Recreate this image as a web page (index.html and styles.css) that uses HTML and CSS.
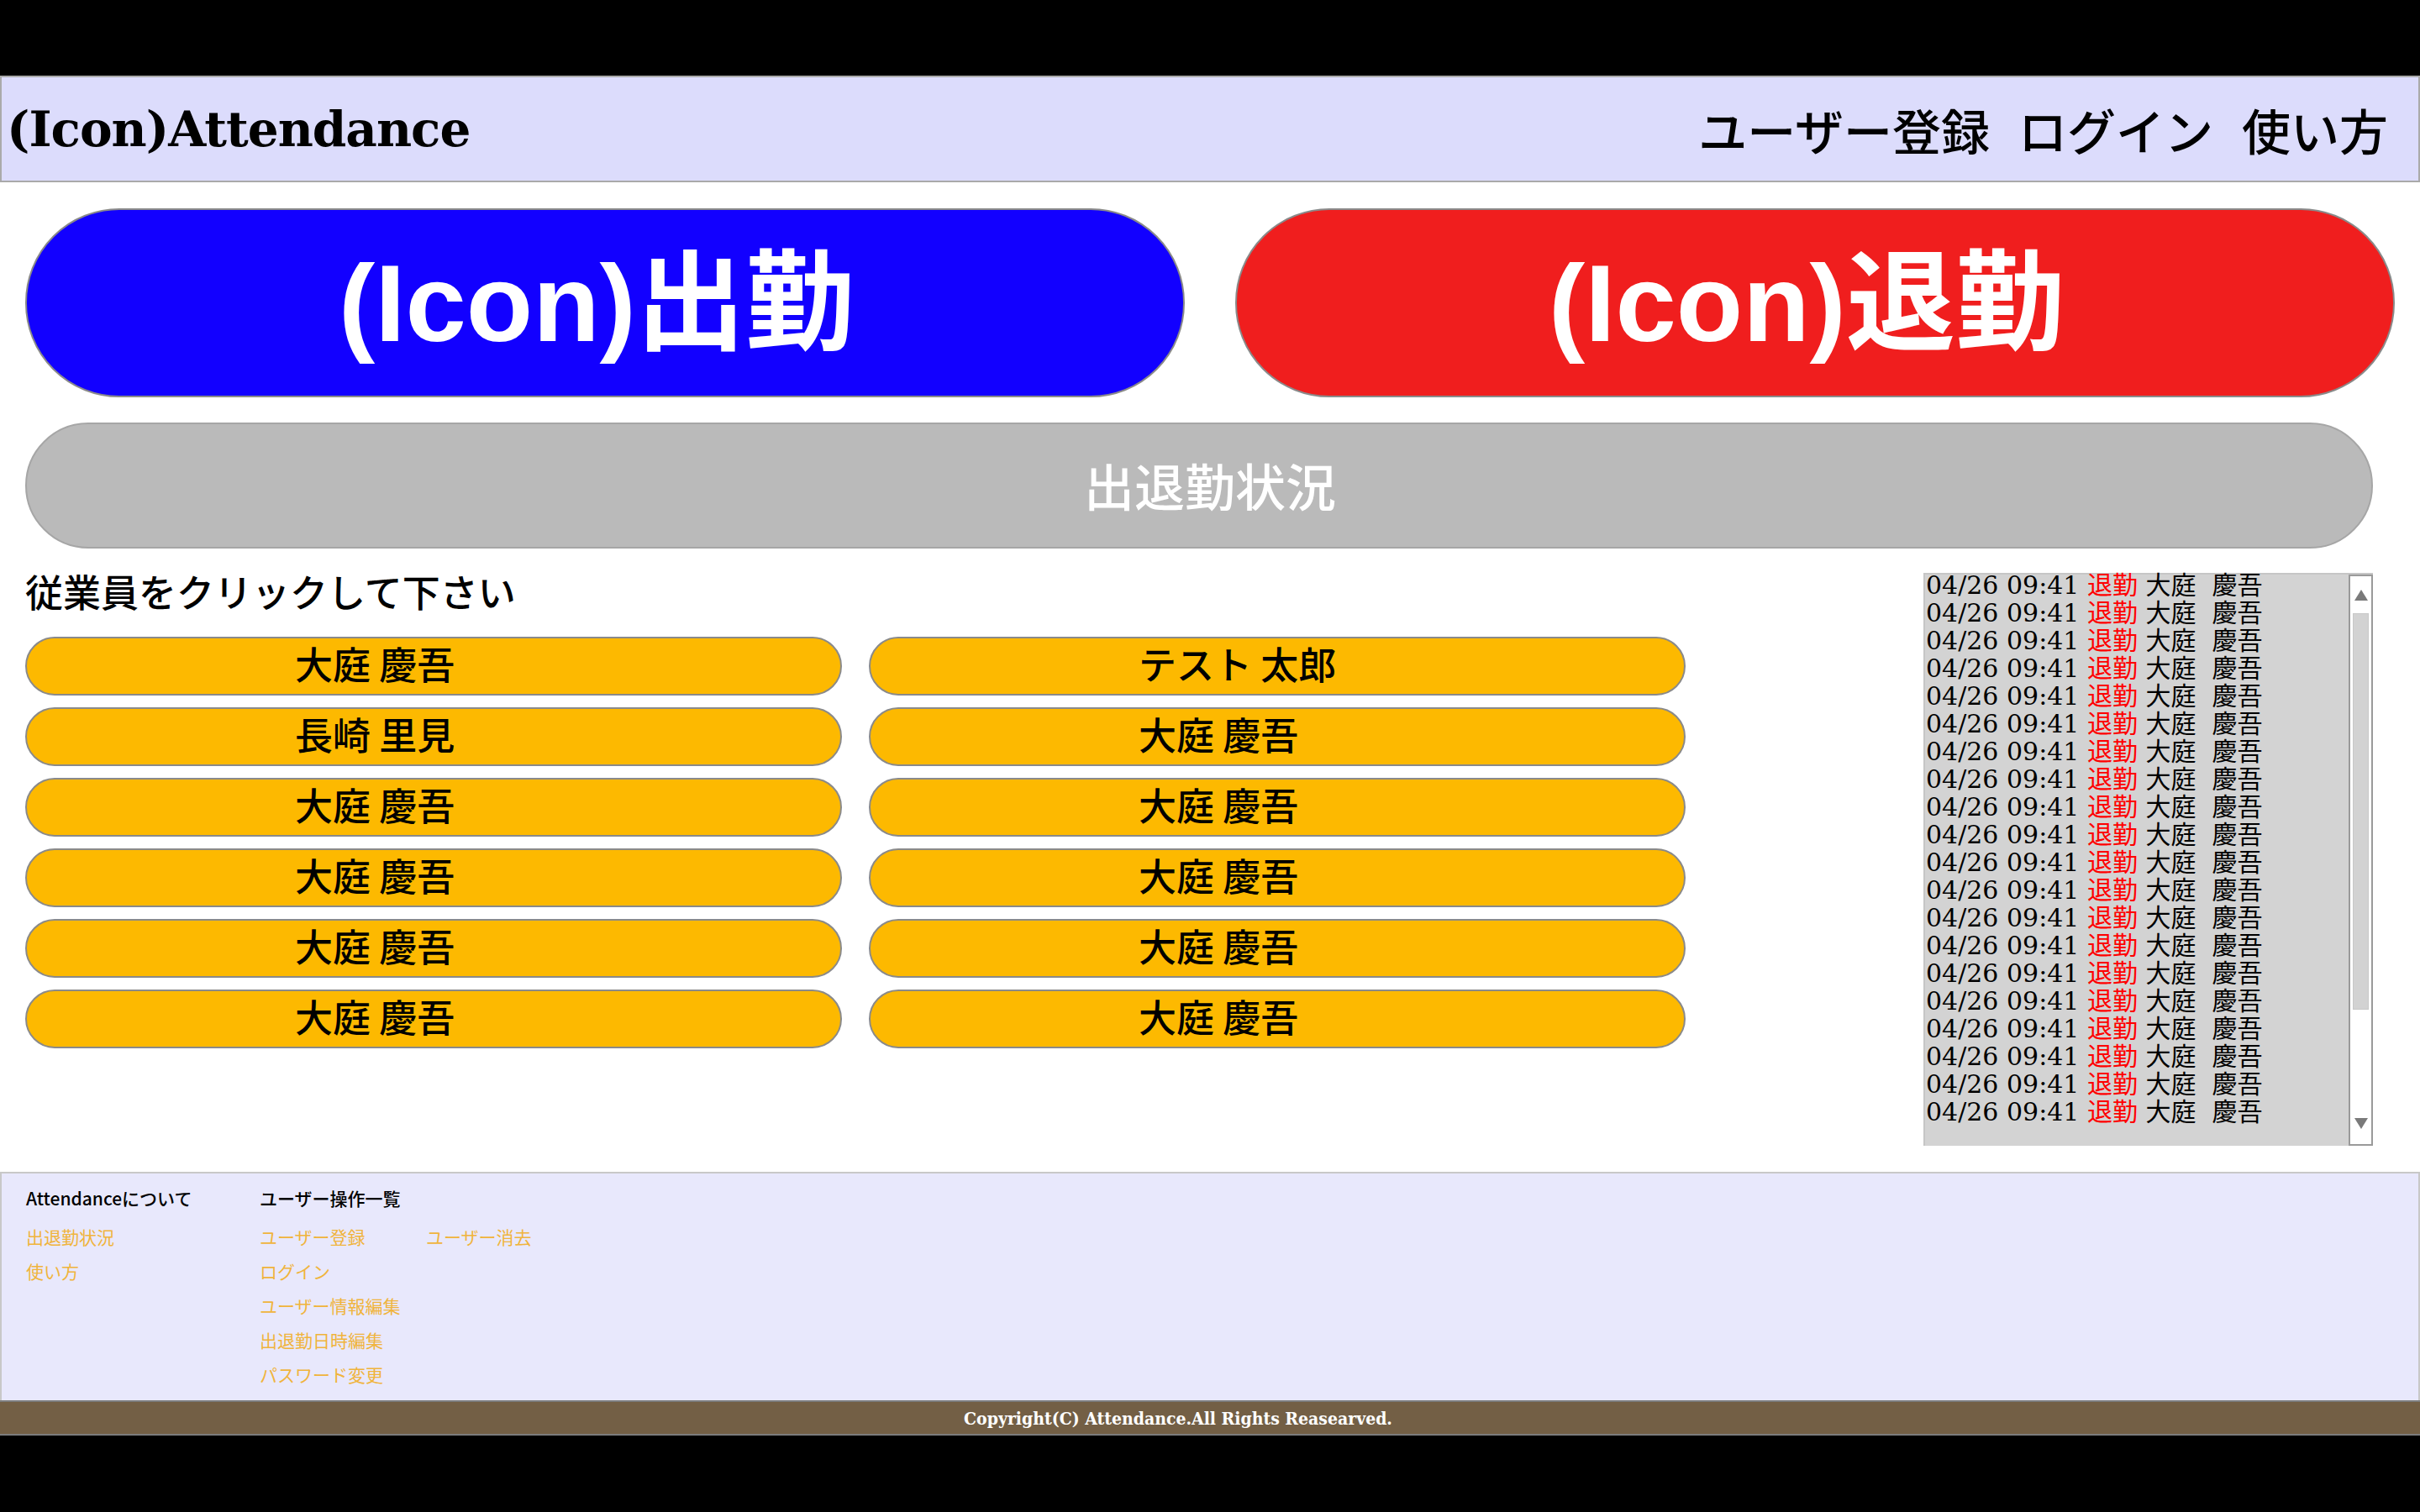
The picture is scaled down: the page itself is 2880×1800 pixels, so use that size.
FILE: index.html
```html
<!DOCTYPE html>
<html lang="ja">
<head>
<meta charset="utf-8">
<title>Attendance</title>
<link rel="stylesheet" href="styles.css">
</head>
<body>
<div class="page">
  <header class="site-header">
    <h1 class="logo">(Icon)Attendance</h1>
    <nav class="nav">
      <a class="nav-link">ユーザー登録</a>
      <a class="nav-link">ログイン</a>
      <a class="nav-link">使い方</a>
    </nav>
  </header>

  <main class="main">
    <div class="punch-row">
      <button class="punch punch-in">(Icon)出勤</button>
      <button class="punch punch-out">(Icon)退勤</button>
    </div>

    <div class="status-bar">出退勤状況</div>

    <div class="content">
      <section class="employees">
        <p class="instruction">従業員をクリックして下さい</p>
        <div class="emp-grid">
          <button class="emp"><span class="emp-name">大庭 慶吾</span></button>
          <button class="emp"><span class="emp-name">テスト 太郎</span></button>
          <button class="emp"><span class="emp-name">長崎 里見</span></button>
          <button class="emp"><span class="emp-name">大庭 慶吾</span></button>
          <button class="emp"><span class="emp-name">大庭 慶吾</span></button>
          <button class="emp"><span class="emp-name">大庭 慶吾</span></button>
          <button class="emp"><span class="emp-name">大庭 慶吾</span></button>
          <button class="emp"><span class="emp-name">大庭 慶吾</span></button>
          <button class="emp"><span class="emp-name">大庭 慶吾</span></button>
          <button class="emp"><span class="emp-name">大庭 慶吾</span></button>
          <button class="emp"><span class="emp-name">大庭 慶吾</span></button>
          <button class="emp"><span class="emp-name">大庭 慶吾</span></button>
        </div>
      </section>

      <aside class="log">
        <ul class="log-list">
          <li>04/26 09:41 <span class="out">退勤</span> 大庭  慶吾</li>
          <li>04/26 09:41 <span class="out">退勤</span> 大庭  慶吾</li>
          <li>04/26 09:41 <span class="out">退勤</span> 大庭  慶吾</li>
          <li>04/26 09:41 <span class="out">退勤</span> 大庭  慶吾</li>
          <li>04/26 09:41 <span class="out">退勤</span> 大庭  慶吾</li>
          <li>04/26 09:41 <span class="out">退勤</span> 大庭  慶吾</li>
          <li>04/26 09:41 <span class="out">退勤</span> 大庭  慶吾</li>
          <li>04/26 09:41 <span class="out">退勤</span> 大庭  慶吾</li>
          <li>04/26 09:41 <span class="out">退勤</span> 大庭  慶吾</li>
          <li>04/26 09:41 <span class="out">退勤</span> 大庭  慶吾</li>
          <li>04/26 09:41 <span class="out">退勤</span> 大庭  慶吾</li>
          <li>04/26 09:41 <span class="out">退勤</span> 大庭  慶吾</li>
          <li>04/26 09:41 <span class="out">退勤</span> 大庭  慶吾</li>
          <li>04/26 09:41 <span class="out">退勤</span> 大庭  慶吾</li>
          <li>04/26 09:41 <span class="out">退勤</span> 大庭  慶吾</li>
          <li>04/26 09:41 <span class="out">退勤</span> 大庭  慶吾</li>
          <li>04/26 09:41 <span class="out">退勤</span> 大庭  慶吾</li>
          <li>04/26 09:41 <span class="out">退勤</span> 大庭  慶吾</li>
          <li>04/26 09:41 <span class="out">退勤</span> 大庭  慶吾</li>
          <li>04/26 09:41 <span class="out">退勤</span> 大庭  慶吾</li>
        </ul>
        <div class="scrollbar">
          <div class="sb-btn"><span class="arrow-up"></span></div>
          <div class="sb-track"><div class="sb-thumb"></div></div>
          <div class="sb-btn sb-btn-down"><span class="arrow-down"></span></div>
        </div>
      </aside>
    </div>
  </main>

  <footer class="site-footer">
    <div class="foot-col foot-col-about">
      <h2 class="foot-title">Attendanceについて</h2>
      <ul class="foot-links">
        <li><a class="foot-link">出退勤状況</a></li>
        <li><a class="foot-link">使い方</a></li>
      </ul>
    </div>
    <div class="foot-col foot-col-ops">
      <h2 class="foot-title">ユーザー操作一覧</h2>
      <div class="foot-ops">
        <ul class="foot-links foot-links-main">
          <li><a class="foot-link">ユーザー登録</a></li>
          <li><a class="foot-link">ログイン</a></li>
          <li><a class="foot-link">ユーザー情報編集</a></li>
          <li><a class="foot-link">出退勤日時編集</a></li>
          <li><a class="foot-link">パスワード変更</a></li>
        </ul>
        <ul class="foot-links">
          <li><a class="foot-link">ユーザー消去</a></li>
        </ul>
      </div>
    </div>
  </footer>
  <div class="copyright">Copyright(C) Attendance.All Rights Reasearved.</div>
</div>
</body>
</html>
```

FILE: styles.css
```css
* {
  box-sizing: border-box;
}

html, body {
  margin: 0;
  padding: 0;
}

body {
  background: #000;
  font-family: "Noto Sans CJK JP", sans-serif;
  color: #000;
}

.page {
  margin-top: 90px;
  background: #fff;
}

/* Header */
.site-header {
  height: 127px;
  background: #dcdcfc;
  border: 2px solid #aaaaaa;
  display: flex;
  align-items: center;
  justify-content: space-between;
  padding: 0 36px 0 6px;
}

.logo {
  margin: 0;
  font-family: "DejaVu Serif", serif;
  font-weight: 700;
  font-size: 58px;
  letter-spacing: -1px;
  line-height: 1;
}

.nav {
  display: flex;
  gap: 34px;
  align-items: center;
}

.nav-link {
  font-family: "Noto Sans CJK JP", sans-serif;
  font-size: 58px;
  font-weight: 500;
  line-height: 1;
  color: #000;
}

/* Main */
.main {
  padding: 31px 30px 31px 30px;
}

.punch-row {
  display: flex;
  gap: 60px;
}

.punch {
  flex: 1;
  height: 225px;
  border: 2px solid #8a8a8a;
  border-radius: 112px;
  color: #fff;
  font-family: "Liberation Sans", "Noto Sans CJK JP", sans-serif;
  font-weight: 700;
  font-size: 130px;
  line-height: 1;
  padding: 0 20px 0 0;
  display: flex;
  align-items: center;
  justify-content: center;
}

.punch-in {
  background: #1200ff;
}

.punch-out {
  background: #f01e1e;
}

.status-bar {
  margin-top: 30px;
  width: calc(100% - 26px);
  height: 150px;
  background: #bababa;
  border: 2px solid #a6a6a6;
  border-radius: 75px;
  color: #fff;
  font-size: 60px;
  font-weight: 500;
  display: flex;
  align-items: center;
  justify-content: center;
  padding-left: 26px;
  padding-bottom: 4px;
}

.content {
  margin-top: 28px;
  margin-right: 26px;
  display: flex;
  justify-content: space-between;
  align-items: flex-start;
}

.employees {
  width: 1976px;
}

.instruction {
  margin: 0;
  font-size: 45px;
  font-weight: 500;
  line-height: 45px;
}

.emp-grid {
  margin-top: 32px;
  display: grid;
  grid-template-columns: 1fr 1fr;
  column-gap: 32px;
  row-gap: 14px;
}

.emp {
  height: 70px;
  background: #fdb900;
  border: 2px solid #8a8a8a;
  border-radius: 35px;
  padding: 0 0 8px 0;
  font-family: "Noto Sans CJK JP", sans-serif;
  font-size: 45px;
  font-weight: 500;
  color: #000;
  display: flex;
  align-items: center;
  justify-content: center;
}

.emp-name {
  display: inline-block;
  width: 330px;
  text-align: left;
  line-height: 1;
}

/* Log panel */
.log {
  margin-top: 1px;
  width: 535px;
  height: 682px;
  background: #d3d3d3;
  border-top: 2px solid #c6c6c6;
  border-left: 2px solid #c6c6c6;
  display: flex;
}

.log-list {
  flex: 1;
  margin: -4px 0 0 0;
  padding: 0 0 0 1px;
  list-style: none;
  overflow: hidden;
  font-family: "DejaVu Serif", "Noto Sans CJK JP", serif;
  font-size: 30px;
  line-height: 33px;
  color: #000;
}

.log-list li {
  white-space: pre;
}

.out {
  color: #ff0000;
}

.scrollbar {
  width: 29px;
  background: #fff;
  border: 2px solid #9a9a9a;
  display: flex;
  flex-direction: column;
}

.sb-btn {
  height: 44px;
  display: flex;
  align-items: center;
  justify-content: center;
}

.sb-btn-down {
  height: 50px;
}

.arrow-up {
  width: 0;
  height: 0;
  border-left: 8px solid transparent;
  border-right: 8px solid transparent;
  border-bottom: 13px solid #7a7a7a;
}

.arrow-down {
  width: 0;
  height: 0;
  border-left: 8px solid transparent;
  border-right: 8px solid transparent;
  border-top: 13px solid #7a7a7a;
}

.sb-track {
  flex: 1;
  padding: 0 3px;
}

.sb-thumb {
  height: 472px;
  background: #d2d2d2;
  border: 1px solid #c8c8c8;
}

/* Footer */
.site-footer {
  height: 272px;
  background: #e8e8fc;
  border-top: 2px solid #c8c8c8;
  border-left: 2px solid #c8c8c8;
  border-right: 2px solid #c8c8c8;
  padding: 10px 29px 0 29px;
  display: flex;
}

.foot-col-about {
  width: 278px;
}

.foot-title {
  margin: 0 0 7px 0;
  font-size: 21px;
  font-weight: 500;
  line-height: 39px;
  color: #000;
}

.foot-ops {
  display: flex;
}

.foot-links {
  margin: 0;
  padding: 0;
  list-style: none;
}

.foot-links-main {
  width: 198px;
}

.foot-links li {
  line-height: 39px;
}

.foot-link {
  font-size: 21px;
  color: #f0b43c;
}

.copyright {
  height: 42px;
  background: #735f45;
  border-top: 2px solid #7c7c7c;
  border-bottom: 2px solid #7c7c7c;
  color: #fff;
  font-family: "DejaVu Serif Condensed", "DejaVu Serif", serif;
  font-weight: 700;
  font-size: 21px;
  display: flex;
  align-items: center;
  justify-content: center;
  padding-right: 76px;
}
```
